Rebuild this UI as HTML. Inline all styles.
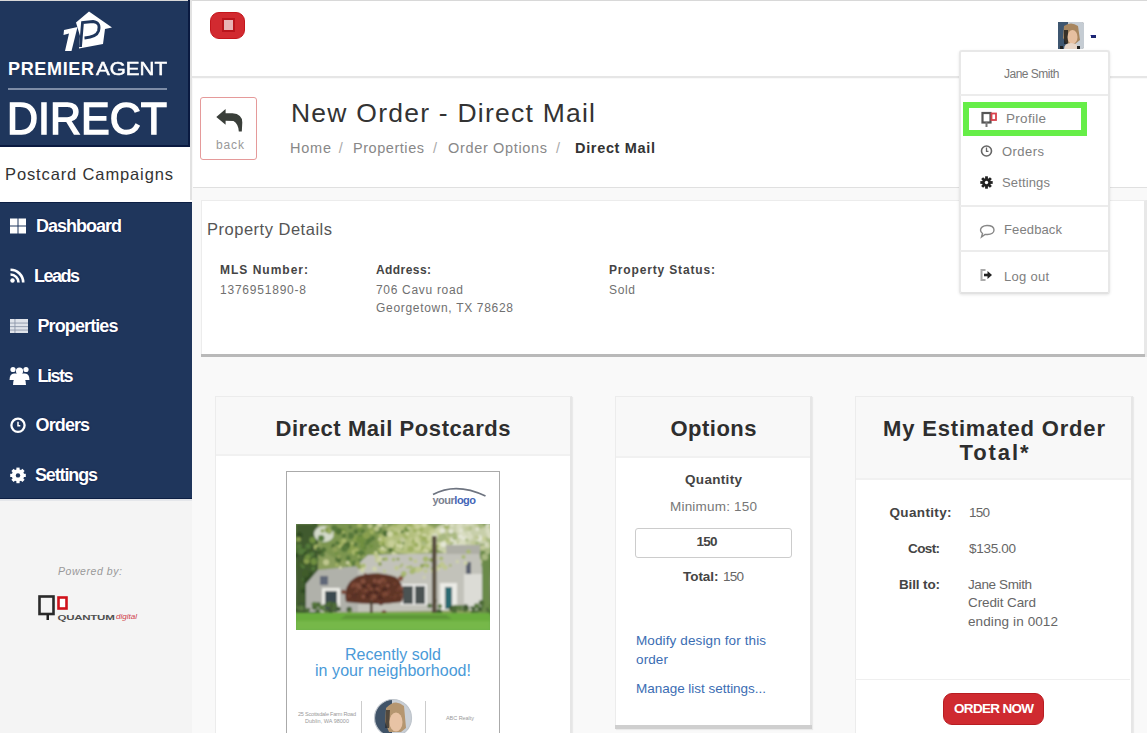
<!DOCTYPE html><html><head><meta charset="utf-8"><style>
html,body{margin:0;padding:0;width:1147px;height:733px;overflow:hidden;background:#f9f9f9}
body{position:relative;font-family:"Liberation Sans",sans-serif}
.t{position:absolute;white-space:nowrap}
.r{position:absolute}
</style></head><body>
<div class="r" style="left:0px;top:0px;width:1147px;height:733px;background:#f9f9f9"></div>
<div class="r" style="left:0px;top:0px;width:192px;height:733px;background:#f4f4f4"></div>
<div class="r" style="left:0px;top:0px;width:190px;height:146px;background:#1f365c"></div>
<div class="r" style="left:0px;top:0px;width:1147px;height:1px;background:#d8d8d8"></div>
<div class="r" style="left:0px;top:146px;width:192px;height:56px;background:#fff"></div>
<div class="r" style="left:0px;top:202px;width:192px;height:297px;background:#1f365c;border-top:1.5px solid #0c1f44;border-bottom:1.5px solid #0c1f44;box-sizing:border-box"></div>
<div class="r" style="left:0px;top:499px;width:192px;height:1.5px;background:#e4e6ea"></div>
<div class="r" style="left:188px;top:0px;width:2px;height:147px;background:#0a1a40"></div>
<div class="r" style="left:0px;top:145px;width:190px;height:1.5px;background:#0a1a40"></div>
<div class="r" style="left:190px;top:0px;width:2px;height:200px;background:#e2e2e2"></div>
<div class="r" style="left:192px;top:1px;width:955px;height:76px;background:#fff"></div>
<div class="r" style="left:192px;top:76px;width:955px;height:2px;background:#e6e6e6"></div>
<div class="r" style="left:193px;top:79px;width:954px;height:108px;background:#fff"></div>
<div class="r" style="left:193px;top:187px;width:954px;height:1px;background:#e0e0e0"></div>
<div class="r" style="left:201px;top:200px;width:946px;height:157px;background:#fff;border:1px solid #ececec;border-right:3px solid #e8e8e8;box-sizing:border-box"></div>
<div class="r" style="left:201px;top:353.5px;width:944px;height:3px;background:#b9b9b9"></div>
<div class="r" style="left:215px;top:396px;width:357px;height:347px;background:#fff;border:1px solid #ececec;border-right:2px solid #e6e6e6;box-sizing:border-box;box-shadow:1px 1px 1px rgba(0,0,0,.06)"></div>
<div class="r" style="left:216px;top:397px;width:354px;height:59px;background:#f8f8f8;border-bottom:2px solid #f1f1f1;box-sizing:border-box"></div>
<div class="r" style="left:615px;top:396px;width:197px;height:333px;background:#fff;border:1px solid #ececec;border-right:2px solid #e6e6e6;box-sizing:border-box;box-shadow:1px 1px 1px rgba(0,0,0,.06)"></div>
<div class="r" style="left:616px;top:397px;width:194px;height:61px;background:#f8f8f8;border-bottom:2px solid #f1f1f1;box-sizing:border-box"></div>
<div class="r" style="left:615px;top:725px;width:197px;height:3.5px;background:#cfcfcf"></div>
<div class="r" style="left:855px;top:396px;width:278px;height:347px;background:#fff;border:1px solid #ececec;border-right:2px solid #e6e6e6;box-sizing:border-box;box-shadow:1px 1px 1px rgba(0,0,0,.06)"></div>
<div class="r" style="left:856px;top:397px;width:275px;height:83px;background:#f8f8f8;border-bottom:2px solid #f1f1f1;box-sizing:border-box"></div>
<div class="r" style="left:855px;top:679px;width:275px;height:1px;background:#efefef"></div>
<svg class="r" style="left:0;top:0" width="192" height="146" viewBox="0 0 192 146">
<path d="M89 11.5 L112 27.5 L105 29 L103 44 L79 48.5 L80 36 L76 22.5 Z" fill="#fff"/>
<path d="M80.5 47 L82.5 22.5 L93 21.5 Q101 22.5 98.5 31 Q96.5 37 84.5 38" fill="none" stroke="#1f365c" stroke-width="2.8"/>
<path d="M85 26 L92.5 25.5 Q96 26.5 95 30.5 Q94 33.5 85.5 34 Z" fill="#fff"/>
<path d="M64 30 L77.5 27 L71.5 51 L65 51 L69 33.5 L63.5 35 Z" fill="#fff"/>
</svg>
<svg class="r" style="left:36px;top:593px" width="106" height="30" viewBox="0 0 106 30">
<rect x="3.5" y="3.5" width="14" height="17.5" fill="none" stroke="#2a2a2a" stroke-width="2.6"/>
<rect x="10.5" y="21" width="2.5" height="6" fill="#222"/>
<rect x="22.5" y="4.5" width="8" height="11" fill="#fff" stroke="#d0121b" stroke-width="2.6"/>
<text x="21.5" y="27" font-family="Liberation Sans" font-weight="700" font-size="8" fill="#505050" letter-spacing="-0.2" textLength="57" lengthAdjust="spacingAndGlyphs">QUANTUM</text>
<text x="80" y="25.5" font-family="Liberation Sans" font-style="italic" font-size="6.5" fill="#d0404a" textLength="21" lengthAdjust="spacingAndGlyphs">digital</text>
</svg>
<div class="t" style="left:8.00px;top:59.56px;font-size:18px;line-height:18px;font-weight:700;font-style:normal;color:#fff;letter-spacing:0.665px;">PREMIER</div>
<div class="t" style="left:95.50px;top:59.56px;font-size:18px;line-height:18px;font-weight:400;font-style:normal;color:#fff;letter-spacing:0.000px;-webkit-text-stroke:0.5px #fff;transform:scaleX(1.1450);transform-origin:0 0">AGENT</div>
<div class="r" style="left:8px;top:88px;width:159px;height:2px;background:#7d8ca6"></div>
<div class="t" style="left:7.00px;top:95.71px;font-size:45px;line-height:45px;font-weight:400;font-style:normal;color:#fff;letter-spacing:0.000px;-webkit-text-stroke:1.5px #fff;transform:scaleX(0.9553);transform-origin:0 0">DIRECT</div>
<div class="t" style="left:5.00px;top:166.03px;font-size:16.5px;line-height:16.5px;font-weight:400;font-style:normal;color:#333;letter-spacing:0.873px;">Postcard Campaigns</div>
<div class="t" style="left:36.00px;top:217.46px;font-size:18px;line-height:18px;font-weight:700;font-style:normal;color:#fff;letter-spacing:-1.002px;text-shadow:0 0 1.5px #000a40">Dashboard</div>
<div class="t" style="left:34.00px;top:267.26px;font-size:18px;line-height:18px;font-weight:700;font-style:normal;color:#fff;letter-spacing:-1.506px;text-shadow:0 0 1.5px #000a40">Leads</div>
<div class="t" style="left:37.50px;top:317.26px;font-size:18px;line-height:18px;font-weight:700;font-style:normal;color:#fff;letter-spacing:-0.893px;text-shadow:0 0 1.5px #000a40">Properties</div>
<div class="t" style="left:37.50px;top:367.06px;font-size:18px;line-height:18px;font-weight:700;font-style:normal;color:#fff;letter-spacing:-1.503px;text-shadow:0 0 1.5px #000a40">Lists</div>
<div class="t" style="left:35.60px;top:416.26px;font-size:18px;line-height:18px;font-weight:700;font-style:normal;color:#fff;letter-spacing:-0.906px;text-shadow:0 0 1.5px #000a40">Orders</div>
<div class="t" style="left:35.00px;top:465.56px;font-size:18px;line-height:18px;font-weight:700;font-style:normal;color:#fff;letter-spacing:-1.144px;text-shadow:0 0 1.5px #000a40">Settings</div>
<div class="t" style="left:58.00px;top:566.11px;font-size:10.5px;line-height:10.5px;font-weight:400;font-style:italic;color:#999;letter-spacing:0.564px;">Powered by:</div>
<div class="r" style="left:210px;top:12px;width:35px;height:27px;background:#d22a30;border:1px solid #c4161c;box-sizing:border-box;border-radius:9px"></div>
<div class="r" style="left:221.5px;top:17.5px;width:13px;height:14px;background:#e8b4b6;border:2px solid #b9151c;box-sizing:border-box"></div>
<div class="r" style="left:1058px;top:22px;width:26px;height:27px;background:#8a7a70;border-radius:3px"></div>
<div class="r" style="left:1091px;top:35px;width:5px;height:3px;background:#1f2a6a"></div>
<div class="r" style="left:200px;top:97px;width:57px;height:63px;border:1.5px solid #e59a9a;border-radius:3px;box-sizing:border-box;background:#fff"></div>
<div class="t" style="left:216.00px;top:138.84px;font-size:12px;line-height:12px;font-weight:400;font-style:normal;color:#999;letter-spacing:0.884px;">back</div>
<div class="t" style="left:291.00px;top:99.57px;font-size:26.5px;line-height:26.5px;font-weight:400;font-style:normal;color:#333;letter-spacing:1.236px;">New Order - Direct Mail</div>
<div class="t" style="left:290.00px;top:140.73px;font-size:14.5px;line-height:14.5px;font-weight:400;font-style:normal;color:#888;letter-spacing:0.774px;">Home</div>
<div class="t" style="left:338.80px;top:140.73px;font-size:14.5px;line-height:14.5px;font-weight:400;font-style:normal;color:#aaa;letter-spacing:0.000px;">/</div>
<div class="t" style="left:353.00px;top:140.73px;font-size:14.5px;line-height:14.5px;font-weight:400;font-style:normal;color:#888;letter-spacing:0.546px;">Properties</div>
<div class="t" style="left:433.00px;top:140.73px;font-size:14.5px;line-height:14.5px;font-weight:400;font-style:normal;color:#aaa;letter-spacing:0.000px;">/</div>
<div class="t" style="left:448.00px;top:140.73px;font-size:14.5px;line-height:14.5px;font-weight:400;font-style:normal;color:#888;letter-spacing:0.662px;">Order Options</div>
<div class="t" style="left:556.00px;top:140.73px;font-size:14.5px;line-height:14.5px;font-weight:400;font-style:normal;color:#aaa;letter-spacing:0.000px;">/</div>
<div class="t" style="left:575.00px;top:140.73px;font-size:14.5px;line-height:14.5px;font-weight:700;font-style:normal;color:#333;letter-spacing:0.667px;">Direct Mail</div>
<div class="t" style="left:207.00px;top:221.03px;font-size:16.5px;line-height:16.5px;font-weight:400;font-style:normal;color:#555;letter-spacing:0.508px;">Property Details</div>
<div class="t" style="left:220.00px;top:264.14px;font-size:12px;line-height:12px;font-weight:700;font-style:normal;color:#444;letter-spacing:1.000px;">MLS Number:</div>
<div class="t" style="left:220.00px;top:283.84px;font-size:12px;line-height:12px;font-weight:400;font-style:normal;color:#707070;letter-spacing:0.781px;">1376951890-8</div>
<div class="t" style="left:376.00px;top:264.14px;font-size:12px;line-height:12px;font-weight:700;font-style:normal;color:#444;letter-spacing:0.427px;">Address:</div>
<div class="t" style="left:376.00px;top:283.84px;font-size:12px;line-height:12px;font-weight:400;font-style:normal;color:#707070;letter-spacing:0.690px;">706 Cavu road</div>
<div class="t" style="left:376.00px;top:301.84px;font-size:12px;line-height:12px;font-weight:400;font-style:normal;color:#707070;letter-spacing:0.692px;">Georgetown, TX 78628</div>
<div class="t" style="left:609.00px;top:264.14px;font-size:12px;line-height:12px;font-weight:700;font-style:normal;color:#444;letter-spacing:0.843px;">Property Status:</div>
<div class="t" style="left:609.00px;top:283.84px;font-size:12px;line-height:12px;font-weight:400;font-style:normal;color:#707070;letter-spacing:0.661px;">Sold</div>
<div class="t" style="left:275.50px;top:417.88px;font-size:22px;line-height:22px;font-weight:700;font-style:normal;color:#2e2e2e;letter-spacing:0.562px;">Direct Mail Postcards</div>
<div class="t" style="left:670.50px;top:418.28px;font-size:22px;line-height:22px;font-weight:700;font-style:normal;color:#2e2e2e;letter-spacing:0.483px;">Options</div>
<div class="t" style="left:883.00px;top:418.38px;font-size:22px;line-height:22px;font-weight:700;font-style:normal;color:#2e2e2e;letter-spacing:0.833px;">My Estimated Order</div>
<div class="t" style="left:959.50px;top:441.98px;font-size:22px;line-height:22px;font-weight:700;font-style:normal;color:#2e2e2e;letter-spacing:1.904px;">Total*</div>
<div class="t" style="left:685.00px;top:473.17px;font-size:13.5px;line-height:13.5px;font-weight:700;font-style:normal;color:#444;letter-spacing:0.321px;">Quantity</div>
<div class="t" style="left:670.00px;top:500.47px;font-size:13.5px;line-height:13.5px;font-weight:400;font-style:normal;color:#777;letter-spacing:0.202px;">Minimum: 150</div>
<div class="r" style="left:635px;top:528px;width:157px;height:30px;border:1px solid #ccc;border-radius:3px;box-sizing:border-box;background:#fff"></div>
<div class="t" style="left:696.50px;top:534.97px;font-size:13.5px;line-height:13.5px;font-weight:700;font-style:normal;color:#444;letter-spacing:-0.762px;">150</div>
<div class="t" style="left:683.00px;top:569.97px;font-size:13.5px;line-height:13.5px;font-weight:700;font-style:normal;color:#444;letter-spacing:-0.048px;">Total:</div>
<div class="t" style="left:723.00px;top:569.97px;font-size:13.5px;line-height:13.5px;font-weight:400;font-style:normal;color:#666;letter-spacing:-0.762px;">150</div>
<div class="t" style="left:636.00px;top:634.47px;font-size:13.5px;line-height:13.5px;font-weight:400;font-style:normal;color:#3b6db3;letter-spacing:0.117px;">Modify design for this</div>
<div class="t" style="left:636.00px;top:652.67px;font-size:13.5px;line-height:13.5px;font-weight:400;font-style:normal;color:#3b6db3;letter-spacing:0.121px;">order</div>
<div class="t" style="left:636.00px;top:681.67px;font-size:13.5px;line-height:13.5px;font-weight:400;font-style:normal;color:#3b6db3;letter-spacing:-0.025px;">Manage list settings...</div>
<div class="t" style="left:889.50px;top:506.47px;font-size:13.5px;line-height:13.5px;font-weight:700;font-style:normal;color:#444;letter-spacing:0.344px;">Quantity:</div>
<div class="t" style="left:969.00px;top:506.47px;font-size:13.5px;line-height:13.5px;font-weight:400;font-style:normal;color:#666;letter-spacing:-0.762px;">150</div>
<div class="t" style="left:908.00px;top:541.77px;font-size:13.5px;line-height:13.5px;font-weight:700;font-style:normal;color:#444;letter-spacing:-0.624px;">Cost:</div>
<div class="t" style="left:969.00px;top:541.77px;font-size:13.5px;line-height:13.5px;font-weight:400;font-style:normal;color:#666;letter-spacing:-0.299px;">$135.00</div>
<div class="t" style="left:899.00px;top:577.77px;font-size:13.5px;line-height:13.5px;font-weight:700;font-style:normal;color:#444;letter-spacing:-0.141px;">Bill to:</div>
<div class="t" style="left:968.00px;top:577.77px;font-size:13.5px;line-height:13.5px;font-weight:400;font-style:normal;color:#666;letter-spacing:-0.392px;">Jane Smith</div>
<div class="t" style="left:968.00px;top:596.37px;font-size:13.5px;line-height:13.5px;font-weight:400;font-style:normal;color:#666;letter-spacing:-0.102px;">Credit Card</div>
<div class="t" style="left:968.00px;top:615.37px;font-size:13.5px;line-height:13.5px;font-weight:400;font-style:normal;color:#666;letter-spacing:0.109px;">ending in 0012</div>
<div class="r" style="left:943px;top:693px;width:101px;height:32px;background:#cf2a30;border:1.5px solid #b81d22;border-radius:9px;box-sizing:border-box"></div>
<div class="t" style="left:954.00px;top:702.27px;font-size:13.5px;line-height:13.5px;font-weight:700;font-style:normal;color:#fff;letter-spacing:-0.687px;">ORDER NOW</div>
<div class="r" style="left:286px;top:471px;width:214px;height:267px;background:#fff;border:1.5px solid #aaa;box-sizing:border-box"></div>
<div class="r" style="left:296px;top:524px;width:194px;height:106px;background:linear-gradient(#7a9a5a,#5d7d45 40%,#8a8f88 55%,#6e7a65 70%,#5fa040 80%,#6ab04a)"></div>
<div class="t" style="left:344.98px;top:647.46px;font-size:16px;line-height:16px;font-weight:400;font-style:normal;color:#4a9ad8;letter-spacing:0.000px;">Recently sold</div>
<div class="t" style="left:315.00px;top:663.46px;font-size:16px;line-height:16px;font-weight:400;font-style:normal;color:#4a9ad8;letter-spacing:0.061px;">in your neighborhood!</div>
<div class="r" style="left:361px;top:701px;width:1px;height:40px;background:#ccc"></div>
<div class="r" style="left:425px;top:701px;width:1px;height:40px;background:#ccc"></div>
<svg class="r" style="left:373px;top:698px" width="40" height="35" viewBox="0 0 40 35"><defs><clipPath id="cc"><circle cx="20" cy="20" r="18.5"/></clipPath><filter id="b2"><feGaussianBlur stdDeviation="0.6"/></filter></defs><g clip-path="url(#cc)" filter="url(#b2)"><rect width="40" height="40" fill="#c9cfd6"/><rect width="19" height="40" fill="#3f5368"/><path d="M13 10 Q22 0 31 8 L33 30 L28 34 L16 34 L12 24 Z" fill="#b59670"/><path d="M13 12 L17 12 L16 30 L12 30 Z" fill="#2a2a2a" opacity="0.7"/><ellipse cx="23" cy="24" rx="6.5" ry="9.5" fill="#e8c3a5"/></g><circle cx="20" cy="20" r="18.5" fill="none" stroke="#bfc5cc" stroke-width="1.2"/></svg>
<svg class="r" style="left:430px;top:483px" width="60" height="26" viewBox="0 0 60 26"><path d="M3 11.5 Q26 -1 55.5 13" fill="none" stroke="#6e7480" stroke-width="1.7"/><text x="2.5" y="21" font-family="Liberation Sans" font-weight="700" font-size="11" letter-spacing="-0.5"><tspan fill="#7b8190">your</tspan><tspan fill="#4466b8">logo</tspan></text></svg>
<div class="t" style="left:298.00px;top:712.34px;font-size:5.5px;line-height:5.5px;font-weight:400;font-style:normal;color:#9a9a9a;letter-spacing:-0.199px;">25 Scottsdale Farm Road</div>
<div class="t" style="left:305.00px;top:719.34px;font-size:5.5px;line-height:5.5px;font-weight:400;font-style:normal;color:#9a9a9a;letter-spacing:0.012px;">Dublin, WA 98000</div>
<div class="t" style="left:446.00px;top:715.84px;font-size:5.5px;line-height:5.5px;font-weight:400;font-style:normal;color:#9a9a9a;letter-spacing:-0.048px;">ABC Realty</div>
<div class="r" style="left:958.5px;top:49.5px;width:151px;height:244.5px;background:#fff;border:2px solid #e8e8e8;border-bottom-color:#e2e2e2;border-radius:3px;box-sizing:border-box;box-shadow:0 1px 3px rgba(0,0,0,.10)"></div>
<div class="r" style="left:960px;top:94px;width:148px;height:2px;background:#ececec"></div>
<div class="r" style="left:960px;top:205px;width:148px;height:2px;background:#ececec"></div>
<div class="r" style="left:960px;top:250px;width:148px;height:2px;background:#ececec"></div>
<div class="t" style="left:1004.00px;top:68.04px;font-size:12px;line-height:12px;font-weight:400;font-style:normal;color:#777;letter-spacing:-0.503px;">Jane Smith</div>
<div class="r" style="left:963px;top:102px;width:124px;height:34px;border:6px solid #66ee48;box-sizing:border-box"></div>
<div class="t" style="left:1006.00px;top:111.87px;font-size:13.5px;line-height:13.5px;font-weight:400;font-style:normal;color:#808080;letter-spacing:0.289px;">Profile</div>
<div class="t" style="left:1002.00px;top:145.00px;font-size:13px;line-height:13px;font-weight:400;font-style:normal;color:#808080;letter-spacing:0.454px;">Orders</div>
<div class="t" style="left:1002.00px;top:176.00px;font-size:13px;line-height:13px;font-weight:400;font-style:normal;color:#808080;letter-spacing:0.147px;">Settings</div>
<div class="t" style="left:1004.00px;top:223.00px;font-size:13px;line-height:13px;font-weight:400;font-style:normal;color:#808080;letter-spacing:0.130px;">Feedback</div>
<div class="t" style="left:1004.00px;top:269.70px;font-size:13px;line-height:13px;font-weight:400;font-style:normal;color:#808080;letter-spacing:0.271px;">Log out</div>
<svg class="r" style="left:0;top:0" width="1147" height="733" viewBox="0 0 1147 733"><path d="M216.3 117 L225.6 109 L225.6 113.3 L232.5 113.3 Q242.3 114 242.3 122.5 L241.8 131.5 L238.8 131.5 Q238.5 124 233.5 121 L225.6 120.8 L225.6 124.8 Z" fill="#3a3f3a"/><rect x="10" y="218.5" width="7.5" height="7" fill="#fff"/><rect x="18.5" y="218.5" width="7.5" height="7" fill="#fff"/><rect x="10" y="226.5" width="7.5" height="7" fill="#fff"/><rect x="18.5" y="226.5" width="7.5" height="7" fill="#fff"/><circle cx="12.5" cy="280.5" r="2.2" fill="#fff"/><path d="M10.5 274.5 A8 8 0 0 1 18.5 282.5" fill="none" stroke="#fff" stroke-width="2.6"/><path d="M10.5 269.8 A12.7 12.7 0 0 1 23.2 282.5" fill="none" stroke="#fff" stroke-width="2.6"/><rect x="10" y="319" width="18" height="14" fill="#dfe3ea"/><rect x="10" y="322.6" width="18" height="0.9" fill="#8d97aa"/><rect x="10" y="326.2" width="18" height="0.9" fill="#8d97aa"/><rect x="10" y="329.6" width="18" height="0.9" fill="#8d97aa"/><rect x="14.5" y="319" width="0.9" height="14" fill="#8d97aa"/><circle cx="13" cy="369.5" r="2.6" fill="#fff"/><circle cx="26" cy="369.5" r="2.6" fill="#fff"/><circle cx="19.5" cy="371" r="3.6" fill="#fff"/><path d="M9.5 380 Q9.5 373.5 14 373.5 L25 373.5 Q29.5 373.5 29.5 380 Z" fill="#fff"/><path d="M13 385 Q13 376 19.5 376 Q26 376 26 385 Z" fill="#fff"/><circle cx="18" cy="425.3" r="6.6" fill="none" stroke="#fff" stroke-width="2.3"/><path d="M18 421.8 L18 425.8 L20.3 425.8" fill="none" stroke="#fff" stroke-width="1.5"/><g transform="translate(18 475.4)"><circle r="6.2" fill="#fff"/><rect x="-1.6" y="-7.8" width="3.2" height="3" fill="#fff" transform="rotate(0)"/><rect x="-1.6" y="-7.8" width="3.2" height="3" fill="#fff" transform="rotate(45)"/><rect x="-1.6" y="-7.8" width="3.2" height="3" fill="#fff" transform="rotate(90)"/><rect x="-1.6" y="-7.8" width="3.2" height="3" fill="#fff" transform="rotate(135)"/><rect x="-1.6" y="-7.8" width="3.2" height="3" fill="#fff" transform="rotate(180)"/><rect x="-1.6" y="-7.8" width="3.2" height="3" fill="#fff" transform="rotate(225)"/><rect x="-1.6" y="-7.8" width="3.2" height="3" fill="#fff" transform="rotate(270)"/><rect x="-1.6" y="-7.8" width="3.2" height="3" fill="#fff" transform="rotate(315)"/><circle r="2.2" fill="#1f365c"/></g><rect x="982.5" y="113" width="8" height="9.5" fill="none" stroke="#555" stroke-width="2.2"/><rect x="985.5" y="122" width="2" height="5" fill="#777"/><rect x="991.5" y="113.5" width="4.5" height="6.5" fill="#fff" stroke="#d9404a" stroke-width="1.8"/><circle cx="986.5" cy="151" r="5" fill="none" stroke="#666" stroke-width="1.6"/><path d="M986.5 147.5 L986.5 151.3 L988.5 151.3" fill="none" stroke="#666" stroke-width="1.3"/><g transform="translate(986.5 182.5)"><circle r="4.3" fill="#222"/><rect x="-1.4" y="-6.2" width="2.8" height="3" fill="#222" transform="rotate(0)"/><rect x="-1.4" y="-6.2" width="2.8" height="3" fill="#222" transform="rotate(45)"/><rect x="-1.4" y="-6.2" width="2.8" height="3" fill="#222" transform="rotate(90)"/><rect x="-1.4" y="-6.2" width="2.8" height="3" fill="#222" transform="rotate(135)"/><rect x="-1.4" y="-6.2" width="2.8" height="3" fill="#222" transform="rotate(180)"/><rect x="-1.4" y="-6.2" width="2.8" height="3" fill="#222" transform="rotate(225)"/><rect x="-1.4" y="-6.2" width="2.8" height="3" fill="#222" transform="rotate(270)"/><rect x="-1.4" y="-6.2" width="2.8" height="3" fill="#222" transform="rotate(315)"/><circle r="1.7" fill="#fff"/></g><path d="M987 225.5 C992 225.5 994 227.8 994 230 C994 232.5 991.5 234.5 987.5 234.5 L985 234.5 L981.5 237 L982.5 233.5 C981 232.5 980.5 231.3 980.5 230 C980.5 227.8 983 225.5 987 225.5 Z" fill="none" stroke="#888" stroke-width="1.4"/><path d="M985.5 270 L981.5 270 L981.5 280 L985.5 280" fill="none" stroke="#aaa" stroke-width="2"/><path d="M984 275 L989 275" stroke="#222" stroke-width="2.6"/><path d="M987.5 271 L992 275 L987.5 279 Z" fill="#222"/><path d="M1090 35 L1096 35 L1093 37.5 Z" fill="#1a237e"/></svg>
<svg class="r" style="left:1058px;top:22px" width="26" height="27" viewBox="0 0 26 27"><rect width="26" height="27" rx="2" fill="#c5ccd3"/><rect width="10" height="27" fill="#3e5670"/><path d="M6 4 Q13 -1 20 4 L22 18 L17 22 L9 22 L5 16 Z" fill="#a8865f"/><rect x="6" y="8" width="4" height="14" fill="#1a1a1a" opacity="0.8"/><ellipse cx="14.5" cy="15" rx="5" ry="7" fill="#e6bfa0"/><path d="M6 27 Q6 21 13 21 Q20 21 21 27 Z" fill="#e8d6c8"/><rect x="2" y="24" width="3" height="3" fill="#222"/><rect x="19" y="24" width="3" height="3" fill="#222"/></svg>
<svg class="r" style="left:296px;top:524px" width="194" height="106" viewBox="0 0 194 106"><defs><filter id="bl" x="0" y="0" width="100%" height="100%"><feGaussianBlur stdDeviation="0.9"/></filter><clipPath id="ph"><rect width="194" height="106"/></clipPath></defs><g clip-path="url(#ph)"><g filter="url(#bl)"><rect width="194" height="106" fill="#8a9e5c"/><rect x="0" y="0" width="22" height="90" fill="#3f5a2e"/><ellipse cx="60" cy="18" rx="35" ry="20" fill="#7b9550"/><ellipse cx="115" cy="14" rx="30" ry="16" fill="#b4c07e"/><ellipse cx="165" cy="14" rx="30" ry="18" fill="#c8cfaa"/><ellipse cx="28" cy="10" rx="10" ry="8" fill="#d4dacb"/><rect x="184" y="20" width="10" height="70" fill="#6a8a48"/><circle cx="12.0" cy="52.8" r="2.8" fill="#2f4a22"/><circle cx="15.5" cy="30.0" r="2.7" fill="#557a3a"/><circle cx="14.7" cy="50.3" r="2.3" fill="#2f4a22"/><circle cx="21.1" cy="54.2" r="3.2" fill="#2f4a22"/><circle cx="24.7" cy="28.6" r="2.7" fill="#2f4a22"/><circle cx="6.9" cy="28.3" r="3.5" fill="#2f4a22"/><circle cx="10.0" cy="35.3" r="2.3" fill="#557a3a"/><circle cx="19.1" cy="54.5" r="3.1" fill="#2f4a22"/><circle cx="22.3" cy="59.6" r="1.9" fill="#2f4a22"/><circle cx="11.2" cy="37.3" r="1.6" fill="#2f4a22"/><circle cx="4.1" cy="40.7" r="3.1" fill="#3f5c2c"/><circle cx="6.4" cy="25.9" r="2.1" fill="#2f4a22"/><circle cx="12.1" cy="22.2" r="2.6" fill="#557a3a"/><circle cx="6.7" cy="40.7" r="2.4" fill="#557a3a"/><circle cx="18.0" cy="38.4" r="2.3" fill="#3f5c2c"/><circle cx="19.4" cy="63.6" r="1.6" fill="#557a3a"/><circle cx="23.0" cy="55.0" r="3.1" fill="#3f5c2c"/><circle cx="10.0" cy="59.6" r="2.5" fill="#3f5c2c"/><circle cx="17.2" cy="44.6" r="2.0" fill="#557a3a"/><circle cx="12.5" cy="32.4" r="2.9" fill="#557a3a"/><circle cx="3.3" cy="22.2" r="2.4" fill="#557a3a"/><circle cx="5.0" cy="64.4" r="1.5" fill="#3f5c2c"/><circle cx="7.2" cy="67.1" r="2.5" fill="#2f4a22"/><circle cx="14.5" cy="26.9" r="2.0" fill="#3f5c2c"/><circle cx="22.1" cy="25.4" r="1.8" fill="#3f5c2c"/><circle cx="-1.8" cy="24.2" r="3.1" fill="#557a3a"/><circle cx="12.5" cy="65.5" r="2.2" fill="#3f5c2c"/><circle cx="18.4" cy="36.2" r="1.9" fill="#2f4a22"/><circle cx="13.3" cy="36.7" r="3.2" fill="#2f4a22"/><circle cx="13.9" cy="42.3" r="2.3" fill="#3f5c2c"/><circle cx="8.6" cy="26.1" r="1.8" fill="#557a3a"/><circle cx="25.1" cy="28.8" r="3.0" fill="#3f5c2c"/><circle cx="25.2" cy="14.3" r="3.2" fill="#557a3a"/><circle cx="7.7" cy="55.8" r="1.7" fill="#557a3a"/><circle cx="9.8" cy="49.5" r="3.5" fill="#3f5c2c"/><circle cx="17.8" cy="59.4" r="1.6" fill="#2f4a22"/><circle cx="4.9" cy="27.4" r="3.4" fill="#557a3a"/><circle cx="30.1" cy="48.1" r="2.7" fill="#2f4a22"/><circle cx="0.7" cy="-6.6" r="2.7" fill="#3f5c2c"/><circle cx="25.1" cy="73.9" r="3.5" fill="#3f5c2c"/><circle cx="7.1" cy="42.7" r="1.8" fill="#557a3a"/><circle cx="10.6" cy="56.4" r="3.2" fill="#2f4a22"/><circle cx="8.6" cy="38.3" r="3.4" fill="#3f5c2c"/><circle cx="20.1" cy="64.9" r="1.6" fill="#557a3a"/><circle cx="10.6" cy="74.3" r="1.7" fill="#3f5c2c"/><circle cx="-3.4" cy="33.7" r="2.2" fill="#2f4a22"/><circle cx="0.4" cy="31.2" r="2.2" fill="#2f4a22"/><circle cx="3.3" cy="11.2" r="3.0" fill="#2f4a22"/><circle cx="19.1" cy="-3.3" r="3.0" fill="#2f4a22"/><circle cx="16.9" cy="67.7" r="3.0" fill="#2f4a22"/><circle cx="67.0" cy="6.9" r="1.9" fill="#4e6e34"/><circle cx="86.2" cy="16.5" r="3.4" fill="#a9b86a"/><circle cx="82.9" cy="16.8" r="1.9" fill="#8aa050"/><circle cx="37.7" cy="22.0" r="2.5" fill="#4e6e34"/><circle cx="75.4" cy="8.4" r="2.8" fill="#6f8f40"/><circle cx="66.4" cy="14.8" r="2.3" fill="#8aa050"/><circle cx="44.5" cy="21.0" r="3.1" fill="#a9b86a"/><circle cx="111.7" cy="35.0" r="2.9" fill="#56783a"/><circle cx="10.7" cy="36.9" r="2.9" fill="#8aa050"/><circle cx="65.9" cy="19.9" r="2.7" fill="#56783a"/><circle cx="64.9" cy="13.7" r="3.2" fill="#56783a"/><circle cx="47.2" cy="10.7" r="2.6" fill="#8aa050"/><circle cx="104.4" cy="22.9" r="3.0" fill="#6f8f40"/><circle cx="2.6" cy="15.4" r="2.4" fill="#8aa050"/><circle cx="67.9" cy="12.7" r="2.0" fill="#a9b86a"/><circle cx="17.5" cy="19.9" r="2.2" fill="#4e6e34"/><circle cx="48.4" cy="23.1" r="3.3" fill="#a9b86a"/><circle cx="89.5" cy="9.4" r="3.1" fill="#4e6e34"/><circle cx="10.9" cy="32.8" r="2.5" fill="#4e6e34"/><circle cx="77.3" cy="31.7" r="3.2" fill="#8aa050"/><circle cx="26.4" cy="6.9" r="1.8" fill="#8aa050"/><circle cx="20.4" cy="23.2" r="2.6" fill="#a9b86a"/><circle cx="47.3" cy="6.6" r="2.5" fill="#6f8f40"/><circle cx="66.4" cy="17.3" r="1.9" fill="#6f8f40"/><circle cx="64.1" cy="5.9" r="2.6" fill="#6f8f40"/><circle cx="27.7" cy="25.8" r="2.5" fill="#4e6e34"/><circle cx="66.3" cy="29.2" r="2.5" fill="#56783a"/><circle cx="41.2" cy="19.6" r="2.5" fill="#a9b86a"/><circle cx="106.7" cy="8.2" r="1.9" fill="#56783a"/><circle cx="68.3" cy="24.6" r="2.4" fill="#6f8f40"/><circle cx="47.4" cy="8.8" r="1.9" fill="#a9b86a"/><circle cx="71.3" cy="-5.0" r="1.8" fill="#a9b86a"/><circle cx="92.2" cy="39.4" r="3.4" fill="#8aa050"/><circle cx="59.8" cy="14.7" r="3.3" fill="#8aa050"/><circle cx="107.2" cy="18.6" r="1.8" fill="#56783a"/><circle cx="85.4" cy="19.5" r="2.3" fill="#a9b86a"/><circle cx="43.3" cy="37.5" r="1.5" fill="#4e6e34"/><circle cx="22.3" cy="24.8" r="2.3" fill="#4e6e34"/><circle cx="38.7" cy="9.9" r="1.6" fill="#8aa050"/><circle cx="71.6" cy="19.0" r="2.0" fill="#6f8f40"/><circle cx="73.1" cy="15.8" r="3.0" fill="#56783a"/><circle cx="82.0" cy="5.4" r="3.4" fill="#56783a"/><circle cx="93.1" cy="41.7" r="2.6" fill="#a9b86a"/><circle cx="67.3" cy="22.2" r="2.9" fill="#56783a"/><circle cx="75.7" cy="14.2" r="1.5" fill="#6f8f40"/><circle cx="63.3" cy="15.2" r="3.2" fill="#6f8f40"/><circle cx="58.8" cy="26.1" r="1.5" fill="#4e6e34"/><circle cx="11.7" cy="33.2" r="2.7" fill="#6f8f40"/><circle cx="41.8" cy="18.5" r="1.7" fill="#8aa050"/><circle cx="58.8" cy="27.6" r="3.4" fill="#a9b86a"/><circle cx="43.3" cy="18.4" r="2.4" fill="#8aa050"/><circle cx="54.2" cy="41.5" r="3.5" fill="#6f8f40"/><circle cx="100.4" cy="21.9" r="2.6" fill="#8aa050"/><circle cx="41.3" cy="19.2" r="2.4" fill="#56783a"/><circle cx="42.6" cy="7.4" r="3.3" fill="#4e6e34"/><circle cx="53.8" cy="27.8" r="2.0" fill="#8aa050"/><circle cx="79.4" cy="3.7" r="2.8" fill="#56783a"/><circle cx="130.7" cy="17.7" r="3.2" fill="#6f8f40"/><circle cx="97.1" cy="28.5" r="2.0" fill="#8aa050"/><circle cx="94.8" cy="26.1" r="2.3" fill="#4e6e34"/><circle cx="50.3" cy="11.4" r="2.0" fill="#a9b86a"/><circle cx="75.4" cy="22.2" r="2.0" fill="#6f8f40"/><circle cx="54.7" cy="50.6" r="3.4" fill="#4e6e34"/><circle cx="57.0" cy="22.8" r="3.3" fill="#8aa050"/><circle cx="59.3" cy="20.4" r="2.3" fill="#56783a"/><circle cx="53.4" cy="37.2" r="2.0" fill="#6f8f40"/><circle cx="98.8" cy="32.0" r="1.8" fill="#4e6e34"/><circle cx="65.2" cy="20.7" r="2.1" fill="#8aa050"/><circle cx="114.2" cy="35.3" r="3.2" fill="#8aa050"/><circle cx="38.2" cy="4.1" r="3.3" fill="#56783a"/><circle cx="63.6" cy="0.9" r="2.5" fill="#a9b86a"/><circle cx="54.2" cy="3.0" r="1.6" fill="#4e6e34"/><circle cx="31.7" cy="6.0" r="3.1" fill="#8aa050"/><circle cx="95.3" cy="9.2" r="2.6" fill="#6f8f40"/><circle cx="75.3" cy="5.9" r="3.3" fill="#8aa050"/><circle cx="66.3" cy="21.8" r="2.8" fill="#6f8f40"/><circle cx="40.4" cy="29.2" r="1.6" fill="#6f8f40"/><circle cx="33.5" cy="7.1" r="2.5" fill="#6f8f40"/><circle cx="50.8" cy="21.2" r="3.4" fill="#4e6e34"/><circle cx="85.6" cy="28.0" r="3.0" fill="#56783a"/><circle cx="59.9" cy="24.7" r="2.0" fill="#8aa050"/><circle cx="64.4" cy="37.3" r="2.4" fill="#56783a"/><circle cx="108.7" cy="32.2" r="2.1" fill="#6f8f40"/><circle cx="33.4" cy="8.5" r="1.7" fill="#8aa050"/><circle cx="42.2" cy="35.2" r="2.9" fill="#4e6e34"/><circle cx="56.4" cy="19.2" r="1.6" fill="#a9b86a"/><circle cx="71.3" cy="19.1" r="1.9" fill="#56783a"/><circle cx="52.3" cy="34.0" r="2.4" fill="#56783a"/><circle cx="68.5" cy="-17.7" r="2.6" fill="#a9b86a"/><circle cx="118.1" cy="16.1" r="1.5" fill="#56783a"/><circle cx="86.4" cy="26.6" r="3.5" fill="#a9b86a"/><circle cx="17.8" cy="37.5" r="3.4" fill="#6f8f40"/><circle cx="47.9" cy="16.8" r="2.5" fill="#a9b86a"/><circle cx="91.1" cy="36.5" r="2.5" fill="#6f8f40"/><circle cx="54.8" cy="11.7" r="3.3" fill="#56783a"/><circle cx="48.4" cy="24.4" r="3.4" fill="#56783a"/><circle cx="26.6" cy="30.8" r="2.3" fill="#56783a"/><circle cx="40.7" cy="41.0" r="1.5" fill="#a9b86a"/><circle cx="66.7" cy="14.9" r="3.4" fill="#6f8f40"/><circle cx="76.9" cy="14.2" r="2.2" fill="#56783a"/><circle cx="21.1" cy="35.4" r="1.7" fill="#56783a"/><circle cx="61.7" cy="-3.5" r="2.1" fill="#6f8f40"/><circle cx="70.4" cy="11.5" r="3.4" fill="#8aa050"/><circle cx="86.3" cy="17.7" r="2.1" fill="#a9b86a"/><circle cx="65.8" cy="7.6" r="1.6" fill="#56783a"/><circle cx="110.8" cy="5.2" r="2.6" fill="#6f8f40"/><circle cx="98.6" cy="26.0" r="2.4" fill="#8aa050"/><circle cx="47.4" cy="12.2" r="1.6" fill="#4e6e34"/><circle cx="79.7" cy="29.7" r="2.2" fill="#a9b86a"/><circle cx="58.5" cy="39.6" r="2.8" fill="#56783a"/><circle cx="48.2" cy="11.6" r="2.6" fill="#56783a"/><circle cx="86.2" cy="31.8" r="1.7" fill="#4e6e34"/><circle cx="84.3" cy="12.2" r="1.9" fill="#a9b86a"/><circle cx="87.3" cy="19.7" r="1.8" fill="#8aa050"/><circle cx="60.6" cy="27.4" r="2.6" fill="#a9b86a"/><circle cx="61.3" cy="29.3" r="2.6" fill="#6f8f40"/><circle cx="59.9" cy="7.6" r="2.3" fill="#4e6e34"/><circle cx="64.9" cy="29.2" r="3.0" fill="#56783a"/><circle cx="48.7" cy="51.0" r="1.8" fill="#4e6e34"/><circle cx="16.6" cy="16.1" r="3.2" fill="#6f8f40"/><circle cx="112.5" cy="20.7" r="2.3" fill="#c8cf98"/><circle cx="95.3" cy="17.2" r="3.1" fill="#b9c488"/><circle cx="133.3" cy="20.8" r="3.0" fill="#c8cf98"/><circle cx="143.4" cy="11.9" r="1.6" fill="#c8cf98"/><circle cx="133.6" cy="12.8" r="1.7" fill="#d2d8a8"/><circle cx="153.6" cy="33.6" r="1.7" fill="#c8cf98"/><circle cx="152.3" cy="21.9" r="1.5" fill="#d2d8a8"/><circle cx="121.1" cy="34.1" r="2.8" fill="#9fb062"/><circle cx="149.1" cy="11.0" r="2.6" fill="#c8cf98"/><circle cx="111.1" cy="9.8" r="1.6" fill="#d2d8a8"/><circle cx="101.4" cy="18.1" r="2.7" fill="#b9c488"/><circle cx="33.5" cy="7.0" r="2.1" fill="#9fb062"/><circle cx="83.1" cy="-0.7" r="2.5" fill="#d2d8a8"/><circle cx="109.2" cy="13.4" r="2.3" fill="#9fb062"/><circle cx="130.4" cy="16.0" r="3.3" fill="#c8cf98"/><circle cx="130.7" cy="17.2" r="2.3" fill="#9fb062"/><circle cx="116.0" cy="16.3" r="2.2" fill="#c8cf98"/><circle cx="98.7" cy="20.9" r="1.5" fill="#9fb062"/><circle cx="113.0" cy="3.4" r="1.9" fill="#d2d8a8"/><circle cx="97.5" cy="29.4" r="2.0" fill="#d2d8a8"/><circle cx="110.1" cy="32.8" r="1.7" fill="#c8cf98"/><circle cx="74.0" cy="1.8" r="2.5" fill="#b9c488"/><circle cx="128.3" cy="12.4" r="2.3" fill="#d2d8a8"/><circle cx="148.3" cy="15.8" r="2.3" fill="#b9c488"/><circle cx="126.0" cy="23.0" r="2.9" fill="#9fb062"/><circle cx="105.6" cy="-17.0" r="3.4" fill="#9fb062"/><circle cx="128.2" cy="26.2" r="2.5" fill="#c8cf98"/><circle cx="151.2" cy="16.6" r="2.3" fill="#9fb062"/><circle cx="141.9" cy="13.1" r="1.7" fill="#b9c488"/><circle cx="110.7" cy="22.2" r="3.4" fill="#b9c488"/><circle cx="75.9" cy="8.3" r="2.3" fill="#9fb062"/><circle cx="126.6" cy="5.4" r="1.6" fill="#c8cf98"/><circle cx="125.4" cy="24.6" r="2.4" fill="#9fb062"/><circle cx="79.9" cy="28.5" r="1.6" fill="#c8cf98"/><circle cx="115.4" cy="26.6" r="2.3" fill="#c8cf98"/><circle cx="123.8" cy="14.7" r="3.3" fill="#9fb062"/><circle cx="118.1" cy="17.1" r="2.7" fill="#9fb062"/><circle cx="106.2" cy="36.4" r="2.7" fill="#9fb062"/><circle cx="114.1" cy="0.2" r="3.3" fill="#9fb062"/><circle cx="157.0" cy="14.4" r="3.3" fill="#b9c488"/><circle cx="133.0" cy="15.0" r="2.5" fill="#c8cf98"/><circle cx="138.7" cy="11.5" r="2.0" fill="#c8cf98"/><circle cx="120.3" cy="9.6" r="2.5" fill="#b9c488"/><circle cx="128.3" cy="0.1" r="3.1" fill="#d2d8a8"/><circle cx="97.6" cy="9.0" r="2.1" fill="#9fb062"/><circle cx="122.1" cy="2.2" r="2.5" fill="#c8cf98"/><circle cx="115.3" cy="7.2" r="1.6" fill="#b9c488"/><circle cx="83.9" cy="15.3" r="1.8" fill="#c8cf98"/><circle cx="170.2" cy="-3.9" r="2.0" fill="#b9c488"/><circle cx="121.8" cy="23.1" r="3.5" fill="#c8cf98"/><circle cx="121.2" cy="18.3" r="2.4" fill="#d2d8a8"/><circle cx="114.4" cy="-3.4" r="2.8" fill="#b9c488"/><circle cx="118.9" cy="6.6" r="2.1" fill="#9fb062"/><circle cx="86.4" cy="24.5" r="1.9" fill="#d2d8a8"/><circle cx="122.2" cy="20.1" r="2.1" fill="#d2d8a8"/><circle cx="103.4" cy="22.0" r="3.5" fill="#d2d8a8"/><circle cx="108.2" cy="10.7" r="2.4" fill="#b9c488"/><circle cx="137.7" cy="20.1" r="3.1" fill="#c8cf98"/><circle cx="121.2" cy="12.7" r="2.1" fill="#b9c488"/><circle cx="147.2" cy="17.8" r="3.2" fill="#d2d8a8"/><circle cx="136.8" cy="10.3" r="3.2" fill="#c8cf98"/><circle cx="80.6" cy="4.6" r="2.8" fill="#b9c488"/><circle cx="141.5" cy="21.5" r="2.7" fill="#d2d8a8"/><circle cx="137.2" cy="15.9" r="1.6" fill="#9fb062"/><circle cx="154.4" cy="17.5" r="3.3" fill="#b9c488"/><circle cx="125.7" cy="5.6" r="2.2" fill="#9fb062"/><circle cx="120.6" cy="15.1" r="2.5" fill="#c8cf98"/><circle cx="125.7" cy="15.6" r="2.3" fill="#d2d8a8"/><circle cx="108.0" cy="11.0" r="1.8" fill="#9fb062"/><circle cx="97.8" cy="17.9" r="2.1" fill="#b9c488"/><circle cx="102.7" cy="24.8" r="2.2" fill="#c8cf98"/><circle cx="157.4" cy="15.8" r="3.1" fill="#d2d8a8"/><circle cx="95.3" cy="19.8" r="3.4" fill="#c8cf98"/><circle cx="136.4" cy="8.5" r="3.1" fill="#c8cf98"/><circle cx="94.0" cy="10.0" r="3.0" fill="#d2d8a8"/><circle cx="146.5" cy="15.1" r="2.8" fill="#c8cf98"/><circle cx="144.6" cy="20.7" r="2.2" fill="#d2d8a8"/><circle cx="127.4" cy="19.8" r="2.5" fill="#b9c488"/><circle cx="137.5" cy="20.6" r="3.1" fill="#d2d8a8"/><circle cx="99.8" cy="30.3" r="1.6" fill="#c8cf98"/><circle cx="101.5" cy="25.3" r="2.8" fill="#b9c488"/><circle cx="143.7" cy="6.9" r="3.1" fill="#d2d8a8"/><circle cx="83.7" cy="0.3" r="2.7" fill="#d2d8a8"/><circle cx="122.6" cy="9.0" r="1.9" fill="#c8cf98"/><circle cx="128.5" cy="12.0" r="2.2" fill="#d2d8a8"/><circle cx="115.7" cy="28.5" r="3.3" fill="#b9c488"/><circle cx="150.8" cy="2.5" r="2.8" fill="#9fb062"/><circle cx="140.0" cy="22.2" r="2.6" fill="#9fb062"/><circle cx="102.3" cy="7.8" r="2.0" fill="#c8cf98"/><circle cx="100.3" cy="5.8" r="2.4" fill="#b9c488"/><circle cx="188.1" cy="14.6" r="2.4" fill="#c8cf98"/><circle cx="118.7" cy="-1.6" r="2.4" fill="#d2d8a8"/><circle cx="124.4" cy="5.5" r="1.6" fill="#9fb062"/><circle cx="105.1" cy="15.7" r="2.4" fill="#b9c488"/><circle cx="127.8" cy="15.2" r="3.3" fill="#9fb062"/><circle cx="120.2" cy="3.4" r="1.6" fill="#c8cf98"/><circle cx="89.9" cy="1.1" r="1.6" fill="#b9c488"/><circle cx="155.6" cy="13.6" r="3.1" fill="#d2d8a8"/><circle cx="150.3" cy="27.8" r="2.1" fill="#d2d8a8"/><circle cx="99.4" cy="0.8" r="1.9" fill="#9fb062"/><circle cx="100.3" cy="9.6" r="2.1" fill="#9fb062"/><circle cx="137.8" cy="8.4" r="2.0" fill="#c8cf98"/><circle cx="120.1" cy="20.8" r="2.5" fill="#9fb062"/><circle cx="103.4" cy="18.3" r="2.3" fill="#9fb062"/><circle cx="92.3" cy="-3.3" r="1.8" fill="#9fb062"/><circle cx="138.1" cy="21.3" r="2.8" fill="#9fb062"/><circle cx="141.8" cy="11.9" r="2.5" fill="#b9c488"/><circle cx="114.6" cy="25.1" r="3.2" fill="#9fb062"/><circle cx="107.9" cy="41.3" r="2.7" fill="#9fb062"/><circle cx="110.0" cy="17.2" r="2.0" fill="#b9c488"/><circle cx="161.1" cy="25.5" r="2.1" fill="#d8dcc0"/><circle cx="164.5" cy="-2.5" r="1.9" fill="#d8dcc0"/><circle cx="152.1" cy="6.9" r="2.5" fill="#c0c898"/><circle cx="177.7" cy="19.3" r="2.8" fill="#c0c898"/><circle cx="192.4" cy="18.3" r="2.1" fill="#d8dcc0"/><circle cx="147.8" cy="11.8" r="2.1" fill="#a8b880"/><circle cx="175.9" cy="27.4" r="2.4" fill="#a8b880"/><circle cx="203.8" cy="15.6" r="2.9" fill="#e4e6d6"/><circle cx="191.5" cy="22.1" r="3.2" fill="#d8dcc0"/><circle cx="155.2" cy="18.5" r="1.5" fill="#d8dcc0"/><circle cx="146.2" cy="6.6" r="2.7" fill="#e4e6d6"/><circle cx="168.4" cy="35.6" r="1.6" fill="#c0c898"/><circle cx="155.8" cy="18.1" r="1.6" fill="#c0c898"/><circle cx="193.2" cy="15.0" r="3.4" fill="#a8b880"/><circle cx="147.3" cy="20.3" r="2.8" fill="#e4e6d6"/><circle cx="172.8" cy="8.3" r="2.1" fill="#d8dcc0"/><circle cx="123.0" cy="-8.8" r="2.9" fill="#e4e6d6"/><circle cx="167.5" cy="12.9" r="3.2" fill="#e4e6d6"/><circle cx="193.5" cy="21.1" r="1.9" fill="#c0c898"/><circle cx="165.9" cy="28.3" r="1.7" fill="#d8dcc0"/><circle cx="164.2" cy="6.4" r="2.6" fill="#e4e6d6"/><circle cx="150.5" cy="-6.5" r="3.4" fill="#d8dcc0"/><circle cx="135.5" cy="-6.2" r="1.9" fill="#c0c898"/><circle cx="188.9" cy="33.0" r="3.2" fill="#a8b880"/><circle cx="199.1" cy="8.4" r="2.2" fill="#e4e6d6"/><circle cx="161.0" cy="20.5" r="3.3" fill="#e4e6d6"/><circle cx="143.8" cy="16.1" r="1.5" fill="#c0c898"/><circle cx="138.3" cy="20.2" r="2.6" fill="#d8dcc0"/><circle cx="172.9" cy="4.3" r="2.7" fill="#a8b880"/><circle cx="170.9" cy="15.8" r="1.7" fill="#a8b880"/><circle cx="161.8" cy="18.6" r="1.6" fill="#c0c898"/><circle cx="186.5" cy="25.0" r="1.6" fill="#c0c898"/><circle cx="167.4" cy="10.3" r="2.7" fill="#d8dcc0"/><circle cx="183.6" cy="37.6" r="2.6" fill="#c0c898"/><circle cx="192.4" cy="2.5" r="2.9" fill="#e4e6d6"/><circle cx="178.6" cy="18.2" r="1.7" fill="#c0c898"/><circle cx="209.8" cy="7.1" r="3.0" fill="#c0c898"/><circle cx="180.8" cy="1.4" r="2.1" fill="#c0c898"/><circle cx="191.8" cy="27.1" r="2.8" fill="#d8dcc0"/><circle cx="159.2" cy="23.5" r="1.5" fill="#d8dcc0"/><circle cx="173.7" cy="12.7" r="3.0" fill="#d8dcc0"/><circle cx="171.3" cy="0.5" r="2.5" fill="#d8dcc0"/><circle cx="164.3" cy="12.3" r="2.3" fill="#e4e6d6"/><circle cx="159.0" cy="13.5" r="2.4" fill="#c0c898"/><circle cx="154.4" cy="12.4" r="3.2" fill="#c0c898"/><circle cx="153.3" cy="10.3" r="2.4" fill="#a8b880"/><circle cx="160.1" cy="30.2" r="1.6" fill="#d8dcc0"/><circle cx="144.8" cy="14.7" r="3.1" fill="#a8b880"/><circle cx="194.2" cy="11.3" r="3.4" fill="#d8dcc0"/><circle cx="157.6" cy="11.2" r="3.1" fill="#a8b880"/><circle cx="158.3" cy="14.1" r="2.8" fill="#c0c898"/><circle cx="106.6" cy="15.9" r="2.6" fill="#c0c898"/><circle cx="155.0" cy="7.2" r="2.3" fill="#e4e6d6"/><circle cx="193.7" cy="3.6" r="2.3" fill="#c0c898"/><circle cx="156.2" cy="20.1" r="2.4" fill="#a8b880"/><circle cx="137.9" cy="28.3" r="2.0" fill="#e4e6d6"/><circle cx="186.8" cy="23.6" r="2.9" fill="#c0c898"/><circle cx="157.7" cy="21.2" r="1.8" fill="#e4e6d6"/><circle cx="150.7" cy="-0.0" r="1.8" fill="#e4e6d6"/><circle cx="162.2" cy="6.8" r="2.0" fill="#d8dcc0"/><circle cx="127.6" cy="18.9" r="2.0" fill="#a8b880"/><circle cx="164.3" cy="30.7" r="3.2" fill="#a8b880"/><circle cx="159.0" cy="-12.7" r="2.9" fill="#d8dcc0"/><circle cx="177.5" cy="21.6" r="1.9" fill="#c0c898"/><circle cx="183.0" cy="26.6" r="1.9" fill="#a8b880"/><circle cx="203.4" cy="12.2" r="3.0" fill="#e4e6d6"/><circle cx="166.6" cy="18.8" r="3.3" fill="#d8dcc0"/><circle cx="173.4" cy="23.5" r="1.6" fill="#e4e6d6"/><circle cx="181.1" cy="5.5" r="1.9" fill="#d8dcc0"/><circle cx="157.2" cy="15.3" r="2.7" fill="#e4e6d6"/><circle cx="182.9" cy="14.3" r="3.2" fill="#e4e6d6"/><circle cx="184.8" cy="1.8" r="2.8" fill="#a8b880"/><circle cx="155.7" cy="1.1" r="2.4" fill="#d8dcc0"/><circle cx="166.1" cy="29.5" r="3.3" fill="#a8b880"/><circle cx="174.4" cy="-1.5" r="2.8" fill="#d8dcc0"/><circle cx="181.4" cy="4.7" r="1.5" fill="#e4e6d6"/><circle cx="138.8" cy="12.3" r="3.2" fill="#d8dcc0"/><circle cx="171.5" cy="4.2" r="2.5" fill="#c0c898"/><circle cx="192.3" cy="17.0" r="1.8" fill="#a8b880"/><circle cx="158.8" cy="13.4" r="2.6" fill="#a8b880"/><circle cx="163.1" cy="2.3" r="2.8" fill="#d8dcc0"/><circle cx="147.6" cy="12.6" r="3.4" fill="#a8b880"/><circle cx="180.7" cy="13.6" r="2.5" fill="#c0c898"/><circle cx="164.4" cy="0.3" r="2.8" fill="#d8dcc0"/><circle cx="164.9" cy="24.0" r="1.5" fill="#e4e6d6"/><circle cx="192.3" cy="6.9" r="2.8" fill="#d8dcc0"/><circle cx="181.2" cy="19.4" r="2.3" fill="#a8b880"/><circle cx="218.9" cy="13.1" r="2.4" fill="#a8b880"/><circle cx="191.8" cy="26.6" r="3.1" fill="#a8b880"/><circle cx="142.8" cy="16.5" r="2.0" fill="#a8b880"/><path d="M10 60 L22 46 L62 42 L62 88 L10 88 Z" fill="#b0b1aa"/><path d="M62 40 L72 31 L152 29 L160 21 L182 22 L186 44 L186 86 L62 88 Z" fill="#c2c2ba"/><rect x="150" y="21" width="34" height="9" fill="#aeaea6"/><rect x="170" y="38" width="5" height="12" fill="#5a6070"/><rect x="24" y="52" width="8" height="9" fill="#606878"/><rect x="105" y="60" width="26" height="21" fill="#ececea"/><rect x="107" y="62" width="10" height="18" fill="#4c5252"/><rect x="119" y="62" width="10" height="18" fill="#4c5252"/><rect x="144" y="59" width="17" height="27" fill="#ebebe6"/><rect x="149" y="63" width="7" height="22" fill="#2b6a72"/><rect x="26" y="64" width="18" height="24" fill="#eeeee8"/><rect x="29" y="67" width="12" height="21" fill="#3a4850"/><rect x="168" y="50" width="18" height="36" fill="#dcdcd6"/><circle cx="67.2" cy="42.3" r="2.9" fill="#d0d4a8"/><circle cx="44.3" cy="43.5" r="1.5" fill="#d0d4a8"/><circle cx="67.4" cy="32.2" r="1.4" fill="#8ea058"/><circle cx="137.4" cy="45.8" r="2.8" fill="#a8b870"/><circle cx="81.0" cy="36.6" r="2.0" fill="#c0c890"/><circle cx="62.7" cy="32.1" r="1.3" fill="#a8b870"/><circle cx="119.6" cy="44.2" r="1.3" fill="#d0d4a8"/><circle cx="88.4" cy="47.1" r="1.6" fill="#c0c890"/><circle cx="83.8" cy="34.6" r="2.4" fill="#d0d4a8"/><circle cx="89.9" cy="34.9" r="2.2" fill="#a8b870"/><circle cx="102.0" cy="35.0" r="1.6" fill="#8ea058"/><circle cx="154.3" cy="41.4" r="1.4" fill="#a8b870"/><circle cx="129.7" cy="35.1" r="2.9" fill="#a8b870"/><circle cx="128.2" cy="53.4" r="1.3" fill="#d0d4a8"/><circle cx="145.0" cy="39.3" r="1.3" fill="#c0c890"/><circle cx="114.9" cy="35.3" r="1.4" fill="#8ea058"/><circle cx="145.8" cy="40.6" r="2.9" fill="#c0c890"/><circle cx="110.4" cy="42.8" r="1.3" fill="#d0d4a8"/><circle cx="129.7" cy="46.9" r="2.0" fill="#c0c890"/><circle cx="169.7" cy="39.1" r="2.0" fill="#d0d4a8"/><circle cx="137.2" cy="44.2" r="1.6" fill="#8ea058"/><circle cx="172.5" cy="27.7" r="2.3" fill="#a8b870"/><circle cx="118.6" cy="45.8" r="2.7" fill="#a8b870"/><circle cx="129.0" cy="40.9" r="2.0" fill="#a8b870"/><circle cx="114.4" cy="34.7" r="1.7" fill="#a8b870"/><circle cx="131.4" cy="41.8" r="2.3" fill="#a8b870"/><circle cx="82.9" cy="36.6" r="2.0" fill="#d0d4a8"/><circle cx="119.4" cy="37.2" r="1.9" fill="#c0c890"/><circle cx="100.6" cy="44.0" r="2.3" fill="#c0c890"/><circle cx="136.8" cy="47.1" r="2.2" fill="#d0d4a8"/><circle cx="145.2" cy="34.5" r="2.0" fill="#a8b870"/><circle cx="142.5" cy="44.6" r="1.7" fill="#d0d4a8"/><circle cx="107.1" cy="51.2" r="2.3" fill="#8ea058"/><circle cx="30.1" cy="38.3" r="3.0" fill="#c0c890"/><circle cx="116.1" cy="47.6" r="2.7" fill="#a8b870"/><circle cx="95.2" cy="53.2" r="1.6" fill="#a8b870"/><circle cx="142.7" cy="42.6" r="1.6" fill="#a8b870"/><circle cx="125.0" cy="45.1" r="2.2" fill="#c0c890"/><circle cx="126.0" cy="41.8" r="2.0" fill="#8ea058"/><circle cx="80.4" cy="32.3" r="2.3" fill="#c0c890"/><circle cx="42.9" cy="32.7" r="2.1" fill="#8ea058"/><circle cx="82.8" cy="25.3" r="1.2" fill="#a8b870"/><circle cx="53.7" cy="41.1" r="1.8" fill="#a8b870"/><circle cx="149.2" cy="43.4" r="2.5" fill="#c0c890"/><circle cx="130.9" cy="27.2" r="1.8" fill="#d0d4a8"/><circle cx="167.5" cy="32.9" r="2.0" fill="#a8b870"/><circle cx="139.9" cy="34.1" r="2.3" fill="#d0d4a8"/><circle cx="106.0" cy="40.7" r="1.3" fill="#a8b870"/><circle cx="39.1" cy="25.4" r="2.8" fill="#8ea058"/><circle cx="66.4" cy="46.3" r="2.2" fill="#d0d4a8"/><circle cx="67.5" cy="41.7" r="2.1" fill="#a8b870"/><circle cx="104.5" cy="42.4" r="1.2" fill="#a8b870"/><circle cx="61.7" cy="40.1" r="2.9" fill="#8ea058"/><circle cx="136.7" cy="36.5" r="1.5" fill="#c0c890"/><circle cx="51.8" cy="38.8" r="1.8" fill="#d0d4a8"/><circle cx="84.0" cy="40.0" r="1.9" fill="#8ea058"/><circle cx="121.8" cy="46.0" r="2.7" fill="#c0c890"/><circle cx="135.2" cy="36.0" r="2.2" fill="#8ea058"/><circle cx="114.7" cy="43.1" r="1.8" fill="#a8b870"/><circle cx="89.3" cy="25.7" r="1.7" fill="#c0c890"/><circle cx="140.0" cy="44.4" r="2.9" fill="#d0d4a8"/><circle cx="78.6" cy="44.9" r="2.4" fill="#d0d4a8"/><circle cx="81.9" cy="50.2" r="1.7" fill="#a8b870"/><circle cx="97.6" cy="35.6" r="1.8" fill="#a8b870"/><circle cx="87.4" cy="35.3" r="1.5" fill="#8ea058"/><circle cx="111.5" cy="43.3" r="1.3" fill="#a8b870"/><circle cx="63.4" cy="42.8" r="2.4" fill="#8ea058"/><circle cx="161.4" cy="37.6" r="1.6" fill="#d0d4a8"/><circle cx="107.9" cy="49.5" r="2.6" fill="#a8b870"/><circle cx="122.0" cy="44.3" r="1.8" fill="#c0c890"/><path d="M50 78 Q46 60 62 52 Q80 46 100 53 Q110 62 106 78 Q80 82 50 78 Z" fill="#5e3428"/><rect x="74" y="76" width="2.5" height="14" fill="#4a3a2a"/><circle cx="58.5" cy="71.7" r="2.5" fill="#5a3026"/><circle cx="53.0" cy="71.9" r="1.7" fill="#7a4634"/><circle cx="59.2" cy="66.8" r="2.5" fill="#7a4634"/><circle cx="58.6" cy="60.9" r="1.9" fill="#4e2a20"/><circle cx="58.2" cy="66.3" r="1.5" fill="#5a3026"/><circle cx="84.9" cy="78.6" r="2.6" fill="#4e2a20"/><circle cx="53.9" cy="61.2" r="1.6" fill="#5a3026"/><circle cx="74.6" cy="66.4" r="1.8" fill="#84503c"/><circle cx="68.1" cy="66.7" r="2.5" fill="#6e3e2e"/><circle cx="79.8" cy="61.6" r="2.3" fill="#6e3e2e"/><circle cx="57.1" cy="61.8" r="2.5" fill="#7a4634"/><circle cx="88.0" cy="70.8" r="2.2" fill="#7a4634"/><circle cx="93.4" cy="61.3" r="2.5" fill="#5a3026"/><circle cx="78.7" cy="56.5" r="2.0" fill="#84503c"/><circle cx="67.1" cy="57.5" r="2.4" fill="#84503c"/><circle cx="77.1" cy="74.4" r="2.5" fill="#84503c"/><circle cx="85.1" cy="77.2" r="2.6" fill="#84503c"/><circle cx="75.6" cy="72.1" r="1.8" fill="#5a3026"/><circle cx="58.9" cy="63.8" r="1.2" fill="#5a3026"/><circle cx="63.9" cy="63.3" r="2.3" fill="#84503c"/><circle cx="82.5" cy="66.1" r="1.4" fill="#84503c"/><circle cx="47.5" cy="68.0" r="2.3" fill="#7a4634"/><circle cx="76.1" cy="71.9" r="1.4" fill="#7a4634"/><circle cx="104.6" cy="54.4" r="2.5" fill="#84503c"/><circle cx="74.3" cy="68.2" r="2.1" fill="#4e2a20"/><circle cx="94.7" cy="72.8" r="1.2" fill="#6e3e2e"/><circle cx="79.2" cy="64.9" r="1.6" fill="#4e2a20"/><circle cx="78.6" cy="72.2" r="1.9" fill="#84503c"/><circle cx="90.0" cy="69.8" r="1.6" fill="#6e3e2e"/><circle cx="69.3" cy="50.3" r="1.2" fill="#7a4634"/><circle cx="86.8" cy="55.4" r="2.0" fill="#84503c"/><circle cx="66.9" cy="57.4" r="2.4" fill="#84503c"/><circle cx="71.5" cy="62.0" r="2.5" fill="#4e2a20"/><circle cx="88.0" cy="60.5" r="1.6" fill="#6e3e2e"/><circle cx="88.0" cy="88.6" r="2.4" fill="#6e3e2e"/><circle cx="83.7" cy="61.6" r="1.3" fill="#7a4634"/><circle cx="99.7" cy="71.6" r="1.8" fill="#6e3e2e"/><circle cx="84.0" cy="73.4" r="2.3" fill="#5a3026"/><circle cx="84.4" cy="74.1" r="2.5" fill="#4e2a20"/><circle cx="90.4" cy="69.5" r="2.3" fill="#84503c"/><circle cx="104.5" cy="63.9" r="2.3" fill="#7a4634"/><circle cx="81.0" cy="65.2" r="2.0" fill="#84503c"/><circle cx="91.3" cy="59.5" r="1.5" fill="#5a3026"/><circle cx="85.7" cy="76.8" r="2.6" fill="#5a3026"/><circle cx="71.4" cy="62.2" r="2.2" fill="#5a3026"/><circle cx="79.2" cy="57.8" r="1.9" fill="#84503c"/><circle cx="72.1" cy="67.8" r="1.7" fill="#5a3026"/><circle cx="82.9" cy="60.3" r="1.8" fill="#4e2a20"/><circle cx="70.4" cy="66.6" r="1.4" fill="#84503c"/><circle cx="81.3" cy="58.0" r="1.3" fill="#7a4634"/><circle cx="69.7" cy="62.1" r="2.0" fill="#4e2a20"/><circle cx="81.7" cy="58.9" r="2.5" fill="#6e3e2e"/><circle cx="83.6" cy="57.4" r="2.5" fill="#84503c"/><circle cx="69.9" cy="52.8" r="2.3" fill="#7a4634"/><circle cx="80.4" cy="68.3" r="2.3" fill="#4e2a20"/><circle cx="76.0" cy="64.2" r="1.7" fill="#84503c"/><circle cx="88.6" cy="65.7" r="2.5" fill="#4e2a20"/><circle cx="67.2" cy="72.8" r="2.0" fill="#84503c"/><circle cx="92.9" cy="67.9" r="1.9" fill="#6e3e2e"/><circle cx="70.8" cy="52.7" r="2.6" fill="#5a3026"/><circle cx="83.0" cy="66.2" r="1.5" fill="#7a4634"/><circle cx="74.3" cy="65.3" r="1.5" fill="#7a4634"/><circle cx="88.8" cy="64.4" r="1.6" fill="#4e2a20"/><circle cx="62.1" cy="61.4" r="2.6" fill="#84503c"/><circle cx="81.7" cy="61.4" r="1.8" fill="#5a3026"/><circle cx="58.2" cy="60.8" r="2.5" fill="#7a4634"/><circle cx="85.5" cy="62.2" r="1.9" fill="#6e3e2e"/><circle cx="88.8" cy="57.1" r="2.0" fill="#7a4634"/><circle cx="91.8" cy="61.5" r="1.9" fill="#84503c"/><circle cx="71.4" cy="72.0" r="1.9" fill="#4e2a20"/><circle cx="67.4" cy="61.9" r="2.2" fill="#4e2a20"/><circle cx="101.7" cy="66.0" r="2.0" fill="#6e3e2e"/><circle cx="60.1" cy="69.8" r="1.3" fill="#4e2a20"/><circle cx="78.0" cy="61.8" r="2.6" fill="#4e2a20"/><circle cx="105.2" cy="70.8" r="1.8" fill="#7a4634"/><circle cx="77.9" cy="75.7" r="1.3" fill="#5a3026"/><circle cx="98.7" cy="59.7" r="1.9" fill="#6e3e2e"/><circle cx="72.5" cy="61.9" r="2.1" fill="#7a4634"/><circle cx="98.5" cy="73.4" r="1.7" fill="#6e3e2e"/><circle cx="88.8" cy="69.3" r="2.1" fill="#7a4634"/><circle cx="7.0" cy="81.5" r="2.5" fill="#4d6a38"/><circle cx="34.3" cy="80.4" r="3.0" fill="#4d6a38"/><circle cx="28.5" cy="81.8" r="1.7" fill="#4d6a38"/><circle cx="36.0" cy="79.9" r="2.0" fill="#4d6a38"/><circle cx="5.2" cy="80.9" r="2.5" fill="#3d5530"/><circle cx="7.6" cy="80.3" r="1.8" fill="#3d5530"/><circle cx="0.9" cy="83.9" r="1.8" fill="#5a7a40"/><circle cx="36.9" cy="84.3" r="1.9" fill="#4d6a38"/><circle cx="35.5" cy="84.1" r="1.8" fill="#4d6a38"/><circle cx="37.6" cy="84.6" r="2.5" fill="#5a7a40"/><circle cx="35.4" cy="92.4" r="2.2" fill="#4d6a38"/><circle cx="34.5" cy="86.7" r="2.6" fill="#3d5530"/><circle cx="37.0" cy="80.9" r="2.7" fill="#3d5530"/><circle cx="-1.2" cy="85.7" r="2.1" fill="#3d5530"/><circle cx="10.2" cy="87.2" r="3.0" fill="#4d6a38"/><circle cx="21.4" cy="88.9" r="2.7" fill="#3d5530"/><circle cx="12.7" cy="85.3" r="1.6" fill="#4d6a38"/><circle cx="37.3" cy="84.6" r="2.3" fill="#4d6a38"/><circle cx="38.9" cy="80.9" r="2.7" fill="#3d5530"/><circle cx="42.3" cy="85.0" r="2.5" fill="#3d5530"/><circle cx="22.1" cy="80.7" r="2.6" fill="#4d6a38"/><circle cx="27.7" cy="85.6" r="2.0" fill="#5a7a40"/><circle cx="9.7" cy="89.8" r="2.0" fill="#4d6a38"/><circle cx="-10.6" cy="81.2" r="2.9" fill="#4d6a38"/><circle cx="-3.4" cy="86.1" r="2.0" fill="#4d6a38"/><circle cx="39.4" cy="91.7" r="2.6" fill="#5a7a40"/><circle cx="30.2" cy="86.8" r="2.0" fill="#4d6a38"/><circle cx="18.3" cy="80.4" r="2.7" fill="#5a7a40"/><circle cx="-2.9" cy="81.9" r="2.3" fill="#5a7a40"/><circle cx="18.5" cy="83.3" r="2.6" fill="#4d6a38"/><circle cx="35.4" cy="82.0" r="1.6" fill="#3d5530"/><circle cx="-17.5" cy="80.8" r="2.5" fill="#4d6a38"/><circle cx="53.2" cy="85.5" r="2.7" fill="#3d5530"/><circle cx="21.9" cy="86.1" r="1.7" fill="#4d6a38"/><circle cx="54.4" cy="86.2" r="1.7" fill="#5a7a40"/><circle cx="38.5" cy="81.1" r="2.6" fill="#4d6a38"/><circle cx="32.3" cy="80.4" r="2.6" fill="#4d6a38"/><circle cx="8.6" cy="88.4" r="2.0" fill="#3d5530"/><circle cx="5.2" cy="84.1" r="2.6" fill="#5a7a40"/><circle cx="25.5" cy="83.4" r="2.6" fill="#5a7a40"/><circle cx="171.2" cy="84.2" r="2.1" fill="#4d6a38"/><circle cx="202.8" cy="79.1" r="2.5" fill="#3f5a30"/><circle cx="170.5" cy="84.3" r="1.7" fill="#5a7a40"/><circle cx="182.4" cy="82.9" r="1.7" fill="#3f5a30"/><circle cx="165.1" cy="85.3" r="1.8" fill="#5a7a40"/><circle cx="159.4" cy="83.6" r="2.8" fill="#5a7a40"/><circle cx="169.2" cy="85.4" r="2.5" fill="#4d6a38"/><circle cx="194.8" cy="81.4" r="1.5" fill="#5a7a40"/><circle cx="175.7" cy="83.6" r="1.7" fill="#4d6a38"/><circle cx="158.5" cy="87.1" r="2.4" fill="#5a7a40"/><circle cx="162.6" cy="82.8" r="1.8" fill="#5a7a40"/><circle cx="143.2" cy="87.8" r="2.9" fill="#3f5a30"/><circle cx="143.9" cy="82.3" r="2.2" fill="#5a7a40"/><circle cx="155.8" cy="84.3" r="2.9" fill="#3f5a30"/><circle cx="133.6" cy="81.8" r="2.2" fill="#4d6a38"/><circle cx="163.0" cy="85.2" r="1.7" fill="#5a7a40"/><circle cx="200.1" cy="83.2" r="2.7" fill="#4d6a38"/><circle cx="165.5" cy="82.2" r="1.5" fill="#5a7a40"/><circle cx="186.5" cy="82.2" r="1.9" fill="#5a7a40"/><circle cx="164.6" cy="82.9" r="1.7" fill="#5a7a40"/><circle cx="193.5" cy="89.2" r="2.7" fill="#4d6a38"/><circle cx="139.1" cy="76.8" r="1.9" fill="#3f5a30"/><circle cx="191.7" cy="85.3" r="1.8" fill="#4d6a38"/><circle cx="185.4" cy="78.8" r="2.7" fill="#4d6a38"/><circle cx="158.8" cy="87.3" r="2.3" fill="#5a7a40"/><circle cx="169.7" cy="82.8" r="2.6" fill="#3f5a30"/><circle cx="180.5" cy="82.0" r="2.7" fill="#5a7a40"/><circle cx="180.5" cy="88.3" r="2.7" fill="#5a7a40"/><circle cx="177.2" cy="87.6" r="2.3" fill="#4d6a38"/><circle cx="210.9" cy="81.5" r="2.0" fill="#5a7a40"/><circle cx="184.1" cy="85.2" r="2.2" fill="#3f5a30"/><circle cx="177.7" cy="84.5" r="1.7" fill="#3f5a30"/><circle cx="158.0" cy="86.1" r="3.0" fill="#4d6a38"/><circle cx="170.6" cy="83.6" r="2.1" fill="#3f5a30"/><circle cx="158.8" cy="84.4" r="1.7" fill="#4d6a38"/><rect x="136" y="12" width="4.5" height="84" fill="#564c3c"/><rect x="0" y="89" width="194" height="17" fill="#6aae3e"/><rect x="0" y="97" width="194" height="9" fill="#76b84a"/><path d="M50 91 L150 91 L156 95 L44 95 Z" fill="#588a38" opacity="0.7"/></g></g></svg>
</body></html>
